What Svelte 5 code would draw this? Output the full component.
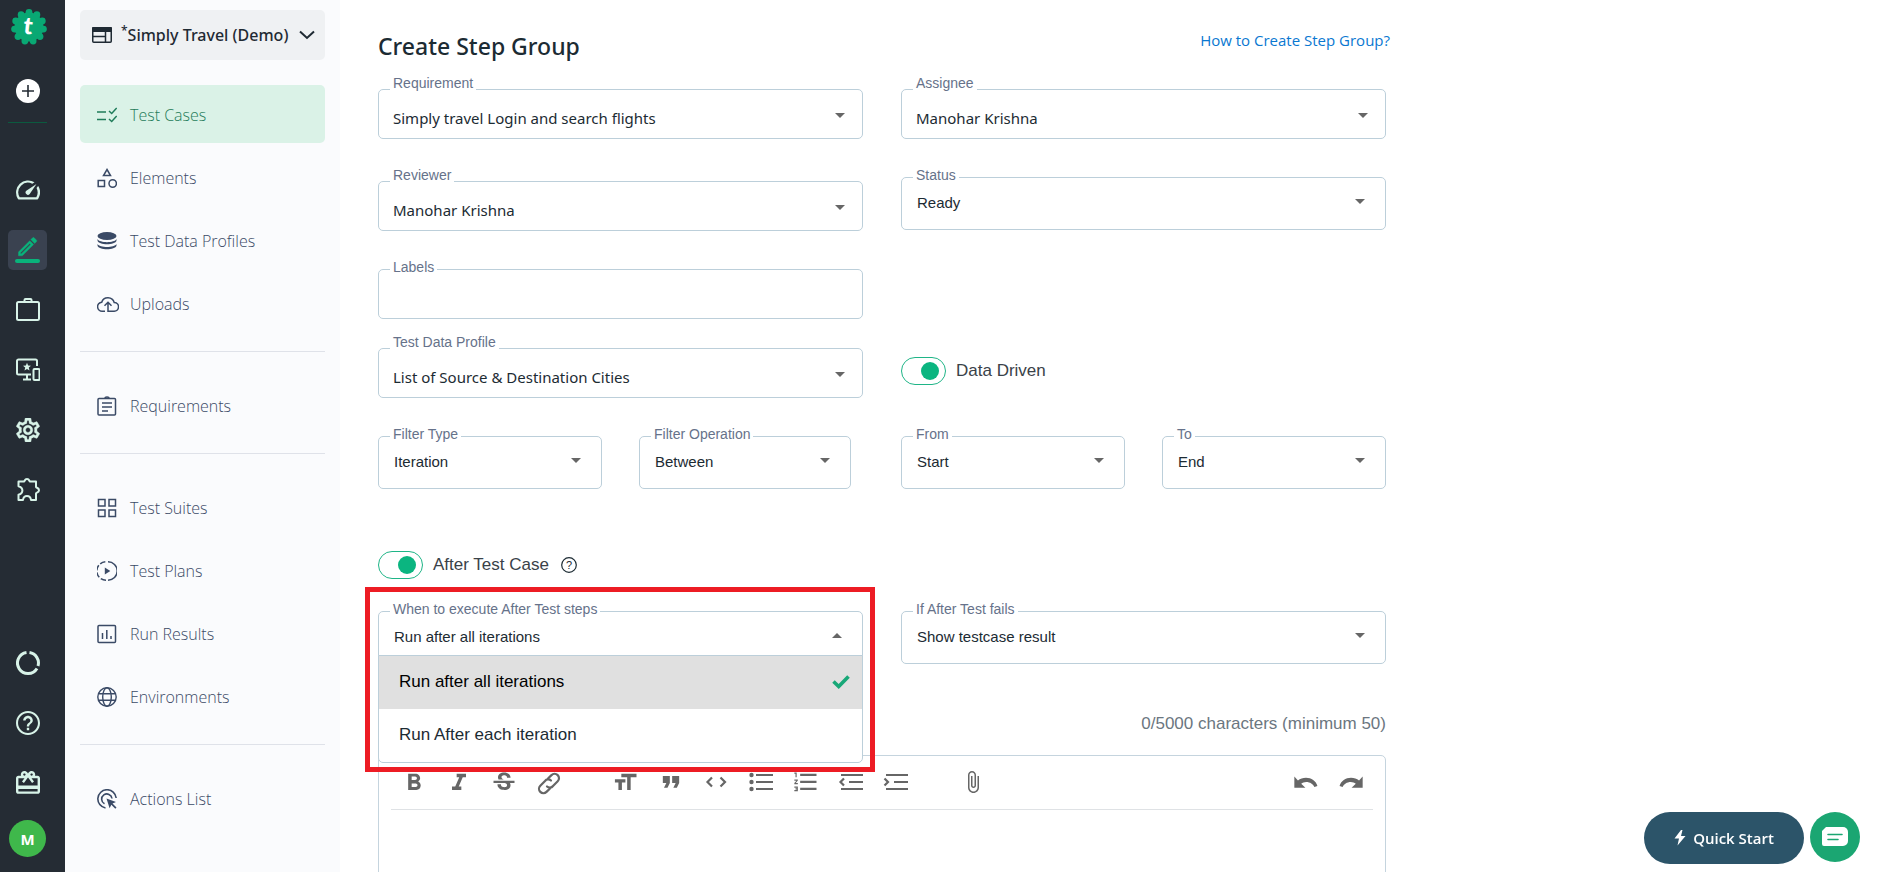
<script>
  const icons = {
    gauge: ['2 2 20 20', '<path fill="currentColor" d="m20.38 8.57-1.23 1.85a8 8 0 0 1-.22 7.58H5.07A8 8 0 0 1 15.58 6.85l1.85-1.23A10 10 0 0 0 3.35 19a2 2 0 0 0 1.72 1h13.85a2 2 0 0 0 1.74-1 10 10 0 0 0-.27-10.44zm-9.79 6.84a2 2 0 0 0 2.83 0l5.66-8.49-8.49 5.66a2 2 0 0 0 0 2.83z"/>'],
    pencil: ['0 0 26 28', '<g transform="translate(.4 -1.6) scale(1.02)"><path fill="currentColor" stroke="currentColor" stroke-width=".4" d="M14.06 9.02l.92.92L5.92 19H5v-.92l9.06-9.06M17.66 3c-.25 0-.51.1-.7.29l-1.83 1.83 3.75 3.75 1.83-1.83c.39-.39.39-1.02 0-1.41l-2.34-2.34c-.2-.2-.45-.29-.71-.29zm-3.6 3.19L3 17.25V21h3.75L17.81 9.94l-3.75-3.75z"/></g><rect x="0" y="23" width="25" height="4" rx="2" fill="currentColor"/>'],
    briefcase: ['0 0 24 24', '<g fill="none" stroke="currentColor" stroke-width="2"><rect x="1" y="4" width="22" height="18" rx="1.5"/><path d="M8.5 4V2a1 1 0 0 1 1-1h5a1 1 0 0 1 1 1v2"/></g>'],
    monitor: ['0 0 24 24', '<g fill="none" stroke="currentColor" stroke-width="2"><path d="M21 8V3a1.500 1.500 0 0 0-1.500-1.500H2.500A1.500 1.500 0 0 0 1 3v12a1.500 1.500 0 0 0 1.500 1.500H15M11 16.500V21M7 21.500h8"/><rect x="17.500" y="11" width="6" height="11" rx="1"/></g><path fill="currentColor" d="m11 4.800 1.100 2.700 2.900.2-2.200 1.900.7 2.900-2.500-1.600-2.500 1.600.7-2.900L7 7.700l2.900-.2z"/>'],
    gear: ['2 2 20 20', '<path fill="currentColor" stroke="currentColor" stroke-width=".3" d="M19.43 12.98c.04-.32.07-.64.07-.98 0-.34-.03-.66-.07-.98l2.11-1.65c.19-.15.24-.42.12-.64l-2-3.46c-.09-.16-.26-.25-.44-.25-.06 0-.12.01-.17.03l-2.49 1c-.52-.4-1.08-.73-1.69-.98l-.38-2.65C14.46 2.18 14.25 2 14 2h-4c-.25 0-.46.18-.49.42l-.38 2.65c-.61.25-1.17.59-1.69.98l-2.49-1c-.06-.02-.12-.03-.18-.03-.17 0-.34.09-.43.25l-2 3.46c-.13.22-.07.49.12.64l2.11 1.65c-.04.32-.07.65-.07.98 0 .33.03.66.07.98l-2.11 1.65c-.19.15-.24.42-.12.64l2 3.46c.09.16.26.25.44.25.06 0 .12-.01.17-.03l2.49-1c.52.4 1.08.73 1.69.98l.38 2.65c.03.24.24.42.49.42h4c.25 0 .46-.18.49-.42l.38-2.65c.61-.25 1.17-.59 1.69-.98l2.49 1c.06.02.12.03.18.03.17 0 .34-.09.43-.25l2-3.46c.12-.22.07-.49-.12-.64l-2.11-1.65zm-1.98-1.71c.04.31.05.52.05.73 0 .21-.02.43-.05.73l-.14 1.13.89.7 1.08.84-.7 1.21-1.27-.51-1.04-.42-.9.68c-.43.32-.84.56-1.25.73l-1.06.43-.16 1.13-.2 1.35h-1.4l-.19-1.35-.16-1.13-1.06-.43c-.43-.18-.83-.41-1.23-.71l-.91-.7-1.06.43-1.27.51-.7-1.21 1.08-.84.89-.7-.14-1.13c-.03-.31-.05-.54-.05-.74s.02-.43.05-.73l.14-1.13-.89-.7-1.08-.84.7-1.21 1.27.51 1.04.42.9-.68c.43-.32.84-.56 1.25-.73l1.06-.43.16-1.13.2-1.35h1.39l.19 1.35.16 1.13 1.06.43c.43.18.83.41 1.23.71l.91.7 1.06-.43 1.27-.51.7 1.21-1.07.85-.89.7.14 1.13zM12 8c-2.21 0-4 1.79-4 4s1.79 4 4 4 4-1.79 4-4-1.79-4-4-4zm0 6c-1.1 0-2-.9-2-2s.9-2 2-2 2 .9 2 2-.9 2-2 2z"/>'],
    puzzle: ['0 0 24 24', '<path fill="none" stroke="currentColor" stroke-width="2" stroke-linejoin="round" d="M2.500 3.500h5.500c.8 0 .5-2.500 3-2.500s2.200 2.500 3 2.500h6v5.500c0 1 3 .6 3 3.200s-3 2.200-3 3.200V22h-5c-.3-2.500-1.800-4-4-4s-3.700 1.500-4 4h-4.500v-5.200c5.200-1.600 5.200-7 0-8.600z"/>'],
    ring: ['0 0 24 24', '<g fill="none" stroke="currentColor" stroke-width="3"><path d="M13.500 1.600A10.500 10.500 0 0 1 22 15"/><path d="M21 17.400A10.500 10.500 0 1 1 10.500 1.600"/></g>'],
    help: ['2 2 20 20', '<path fill="currentColor" d="M11 18h2v-2h-2v2zm1-16C6.480 2 2 6.480 2 12s4.480 10 10 10 10-4.480 10-10S17.520 2 12 2zm0 18.300c-4.580 0-8.300-3.720-8.300-8.300s3.720-8.300 8.300-8.300 8.300 3.720 8.300 8.300-3.720 8.300-8.300 8.300zm0-14.300c-2.210 0-4 1.790-4 4h2c0-1.100.9-2 2-2s2 .9 2 2c0 2-3 1.750-3 5h2c0-2.250 3-2.500 3-5 0-2.210-1.790-4-4-4z"/>'],
    gift: ['2 2 20 20', '<path fill="currentColor" d="M20 6h-2.180c.11-.31.18-.65.18-1 0-1.660-1.340-3-3-3-1.050 0-1.960.54-2.500 1.350l-.5.67-.5-.68C10.960 2.540 10.050 2 9 2 7.340 2 6 3.340 6 5c0 .35.07.69.18 1H4c-1.110 0-1.990.89-1.990 2L2 19c0 1.110.89 2 2 2h16c1.110 0 2-.89 2-2V8c0-1.110-.89-2-2-2zm-5-2c.55 0 1 .45 1 1s-.45 1-1 1-1-.45-1-1 .45-1 1-1zM9 4c.55 0 1 .45 1 1s-.45 1-1 1-1-.45-1-1 .45-1 1-1zm11 15H4v-2h16v2zm0-5H4V8h5.080L7 10.830 8.620 12 11 8.760l1-1.360 1 1.360L15.380 12 17 10.830 14.920 8H20v6z"/>'],
    web: ['0 0 20 16', '<g fill="none" stroke="currentColor" stroke-width="1.500"><rect x=".75" y=".75" width="18.500" height="14.500" rx="1"/><path d="M1 9.500h12M13.500 4v11"/></g><path fill="currentColor" d="M0 1a1 1 0 0 1 1-1h18a1 1 0 0 1 1 1v4H0z"/>'],
    checklist: ['0 0 20 20', '<g fill="none" stroke="currentColor" stroke-width="1.500"><path d="M0 7h9M0 14.500h9M12 6l2.700 2.500 5-5.500M12 14l2.700 2.500 5-5.500"/></g>'],
    shapes: ['0 0 20 20', '<g fill="none" stroke="currentColor" stroke-width="1.500"><path d="M10 1.500 13.500 7.500H6.500zM1.200 12.500h6.300v6H1.200z"/><circle cx="15.700" cy="15.500" r="3.700"/></g>'],
    database: ['0 0 20 20', '<g fill="currentColor"><ellipse cx="10" cy="5" rx="9.500" ry="4"/><path d="M.5 8c2 4.200 17 4.200 19 0v1.500c-1 5-18 5-19 0zM.5 13c2 4 17 4 19 0v1.500c-1 5-18 5-19 0z"/></g>'],
    cloud: ['0 0 22 18', '<g fill="none" stroke="currentColor" stroke-width="1.500"><path d="M8 16.200H5.500a4.500 4.500 0 0 1-.8-9A6.500 6.500 0 0 1 17.200 7.500a4.300 4.300 0 0 1 0 8.700H11V7.500M7.500 10.700 11 7.300l3.500 3.400"/></g>'],
    clipboard: ['0 0 20 20', '<g fill="none" stroke="currentColor" stroke-width="1.500"><rect x="1" y="2.500" width="17.500" height="16.500" rx="1"/><path d="M5 7h10M5 11h10M5 15h6M8 2.500a2 1.500 0 0 1 4 0"/></g>'],
    grid: ['0 0 20 20', '<g fill="none" stroke="currentColor" stroke-width="1.500"><rect x="1.500" y="1.500" width="6.500" height="6.500"/><rect x="12" y="1.500" width="6.500" height="6.500"/><rect x="1.500" y="12" width="6.500" height="6.500"/><rect x="12" y="12" width="6.500" height="6.500"/></g>'],
    plan: ['0 0 20 20', '<g fill="none" stroke="currentColor" stroke-width="1.500"><path d="M11 .8a9.200 9.200 0 0 1 0 18.400"/><path stroke-dasharray="5.500 2" d="M9 19.200A9.200 9.200 0 0 1 9 .8"/></g><path fill="currentColor" d="M7.800 6.500v7l5.500-3.500z"/>'],
    chart: ['0 0 20 20', '<g fill="none" stroke="currentColor" stroke-width="1.500"><rect x="1" y="1.500" width="17.500" height="17" rx="1"/><path d="M5.500 9v6M9.800 6v9M14 12v3"/></g>'],
    globe: ['0 0 20 20', '<g fill="none" stroke="currentColor" stroke-width="1.400"><circle cx="10" cy="10" r="9.200"/><ellipse cx="10" cy="10" rx="4.300" ry="9.200"/><path d="M1.500 6.700h17M1.500 13.300h17"/></g>'],
    action: ['0 0 20 20', '<g fill="none" stroke="currentColor" stroke-width="1.600"><path d="M8.500 19A9.200 9.200 0 1 1 19.200 9"/><path d="M7.500 14.800A5.200 5.200 0 1 1 15 9.500"/></g><path fill="currentColor" d="m9.500 9.500 9.500 3.500-3.500 1.600 4 4-1.200 1.200-4-4-1.700 3.500z"/>'],
    bold: ['0 0 24 24', '<path fill="currentColor" d="M15.600 10.790c.97-.67 1.650-1.770 1.650-2.790 0-2.260-1.750-4-4-4H7v14h7.040c2.090 0 3.710-1.700 3.710-3.790 0-1.520-.86-2.820-2.150-3.420zM10 6.500h3c.83 0 1.500.67 1.500 1.500s-.67 1.500-1.500 1.500h-3v-3zm3.500 9H10v-3h3.500c.83 0 1.500.67 1.500 1.500s-.67 1.500-1.500 1.500z"/>'],
    italic: ['0 0 24 24', '<path fill="currentColor" d="M10 4v3h2.210l-3.420 8H6v3h8v-3h-2.210l3.420-8H18V4z"/>'],
    strike: ['0 0 24 24', '<path fill="currentColor" d="M7.240 8.750c-.26-.48-.39-1.030-.39-1.670 0-.61.13-1.160.4-1.670.26-.5.63-.93 1.110-1.290.48-.35 1.050-.63 1.700-.83.66-.19 1.390-.29 2.180-.29.81 0 1.540.11 2.210.34.66.22 1.230.54 1.690.94.47.4.83.88 1.080 1.430s.38 1.150.38 1.810h-3.010c0-.31-.05-.59-.15-.85-.09-.27-.24-.49-.44-.68-.2-.19-.45-.33-.75-.44-.3-.1-.66-.16-1.060-.16-.39 0-.74.04-1.030.13s-.53.21-.72.36c-.19.16-.34.34-.44.55-.1.21-.15.43-.15.66 0 .48.25.88.74 1.210.38.25.77.48 1.410.7H7.390c-.05-.08-.11-.17-.15-.25zM21 12v-2H3v2h9.620c.18.07.4.14.55.2.37.17.66.34.87.51s.35.36.43.57c.07.2.11.43.11.69 0 .23-.05.45-.14.66-.09.2-.23.38-.42.53-.19.15-.42.26-.71.35-.29.08-.63.13-1.010.13-.43 0-.83-.04-1.180-.13s-.66-.23-.91-.42c-.25-.19-.45-.44-.59-.75s-.25-.76-.25-1.210H6.400c0 .55.08 1.130.24 1.580s.37.85.65 1.210c.28.35.6.66.98.92.37.26.78.48 1.220.65.44.17.9.3 1.380.39.48.08.96.13 1.440.13.8 0 1.530-.09 2.180-.28s1.210-.45 1.670-.79c.46-.34.82-.77 1.070-1.270s.38-1.070.38-1.710c0-.6-.1-1.140-.31-1.610-.05-.11-.11-.23-.17-.33H21V12z"/>'],
    link: ['-2 -3 28 28', '<g fill="none" stroke="currentColor" stroke-width="2.200" stroke-linecap="round"><path d="M10 14.500a4 4 0 0 0 6-.5l4.700-4.700a4.300 4.300 0 0 0-6.200-6.200L11 6.500"/><path d="M14 8.500a4 4 0 0 0-6 .5l-4.700 4.700a4.300 4.300 0 0 0 6.200 6.200L13 16.500"/></g>'],
    size: ['0 0 24 24', '<path fill="currentColor" d="M8 4v3h5v11h3V7h5V4zM2.500 11.500h3V18h3v-6.500h3v-2.800h-9z"/>'],
    quote: ['0 0 24 24', '<path fill="currentColor" d="M6 16h3l2-4V6H5v6h3zm8 0h3l2-4V6h-6v6h3z"/>'],
    code: ['0 0 28 28', '<path fill="none" stroke="currentColor" stroke-width="2.200" d="m10 8.500-4.500 4.500 4.500 4.500M18.500 8.500l4.500 4.500-4.500 4.500"/>'],
    bullets: ['0 0 28 28', '<g fill="currentColor"><circle cx="4.500" cy="6" r="2.200"/><circle cx="4.500" cy="13" r="2.200"/><circle cx="4.500" cy="20" r="2.200"/><path d="M9 5h17v2H9zM9 12h17v2H9zM9 19h17v2H9z"/></g>'],
    numbers: ['0 1 24 24', '<path fill="currentColor" d="M2 17h2v.5H3v1h1v.5H2v1h3v-4H2v1zm1-9h1V4H2v1h1v3zm-1 3h1.800L2 13.100v.9h3v-1H3.200L5 10.900V10H2v1zm5-6v2h14V5H7zm0 14h14v-2H7v2zm0-6h14v-2H7v2z"/>'],
    outdent: ['0 0 28 28', '<path fill="none" stroke="currentColor" stroke-width="2.200" d="M4 6h22M12 13h14M4 20h22M7 9.500 3.500 13 7 16.500"/>'],
    indent: ['0 0 28 28', '<path fill="none" stroke="currentColor" stroke-width="2.200" d="M4 6h22M12 13h14M4 20h22M2.500 9.500 6 13l-3.500 3.500"/>'],
    clip: ['-2 -1 28 28', '<path fill="currentColor" d="M16.500 6v11.500c0 2.210-1.790 4-4 4s-4-1.790-4-4V5c0-1.380 1.120-2.500 2.500-2.500s2.500 1.120 2.500 2.500v10.500c0 .55-.45 1-1 1s-1-.45-1-1V6H10v9.500c0 1.380 1.120 2.500 2.500 2.500s2.500-1.120 2.500-2.500V5c0-2.210-1.790-4-4-4S7 2.790 7 5v12.500c0 3.040 2.460 5.500 5.500 5.500s5.500-2.460 5.500-5.500V6h-1.500z"/>'],
    undo: ['0 0 24 24', '<path fill="currentColor" d="M12 7.500c-2.650 0-5.050.9-6.900 2.300L2 6.500v9.500h9.500l-3.600-3.400c1.200-.9 2.600-1.500 4.300-1.500 3.300 0 6 1.900 7 4.400l2.600-1C20.600 10.300 16.600 7.500 12 7.500z"/>'],
    redo: ['0 0 24 24', '<path fill="currentColor" d="M12 7.500c2.650 0 5.050.9 6.900 2.300L22 6.500v9.500h-9.500l3.600-3.400c-1.200-.9-2.600-1.500-4.300-1.500-3.300 0-6 1.900-7 4.400l-2.600-1C3.400 10.300 7.400 7.500 12 7.500z"/>']
  };

  const railTop = [
    ['gauge', 'Dashboard'],
    ['pencil', 'Create tests'],
    ['briefcase', 'Projects'],
    ['monitor', 'Devices'],
    ['gear', 'Settings'],
    ['puzzle', 'Add-ons']
  ];
  const railBottom = [
    ['ring', 'Usage'],
    ['help', 'Help'],
    ['gift', 'Rewards']
  ];
  const menu = [
    [['checklist', 'Test Cases'], ['shapes', 'Elements'], ['database', 'Test Data Profiles'], ['cloud', 'Uploads']],
    [['clipboard', 'Requirements']],
    [['grid', 'Test Suites'], ['plan', 'Test Plans'], ['chart', 'Run Results'], ['globe', 'Environments']],
    [['action', 'Actions List']]
  ];
  const tools = [
    [['bold', 'Bold'], ['italic', 'Italic'], ['strike', 'Strikethrough'], ['link', 'Link']],
    [['size', 'Text size'], ['quote', 'Quote'], ['code', 'Code'], ['bullets', 'Bulleted list'], ['numbers', 'Numbered list'], ['outdent', 'Decrease indent'], ['indent', 'Increase indent']],
    [['clip', 'Attach file']],
    [['undo', 'Undo'], ['redo', 'Redo']]
  ];
  const choices = ['Run after all iterations', 'Run After each iteration'];
  const lobes = Array.from({ length: 11 }, (_, i) => {
    const a = (i / 11) * Math.PI * 2 - Math.PI / 2;
    return [18 + Math.cos(a) * 14.6, 18 + Math.sin(a) * 14.6];
  });

  let chosen = $state(choices[0]);
  let open = $state(true);
  let dataDriven = $state(true);
  let afterTest = $state(true);
</script>

{#snippet icon(name, w, h)}
  <svg viewBox={icons[name][0]} width={w} height={h} aria-hidden="true">{@html icons[name][1]}</svg>
{/snippet}

{#snippet field(id, label, value, search)}
  <div class="field" class:search>
    <label for={id}>{label}</label>
    <select {id}><option>{value}</option></select>
    <span class="caret"></span>
  </div>
{/snippet}

<div class="shell">
  <nav class="rail" aria-label="Main">
    <a class="logo" href="#home" aria-label="Home">
      <svg viewBox="0 0 36 36" width="36" height="36">
        <g fill="#09a873">
          <circle cx="18" cy="18" r="14.500" />
          {#each lobes as [x, y]}<circle cx={x} cy={y} r="3.400" />{/each}
        </g>
        <text x="17" y="25" text-anchor="middle" class="mark" transform="rotate(6 18 18)">t</text>
      </svg>
    </a>
    <button class="add" aria-label="Add">
      <svg viewBox="0 0 24 24" width="24" height="24">
        <circle cx="12" cy="12" r="12" fill="#fff" />
        <path d="M12 6v12M6 12h12" stroke="#252c34" stroke-width="1.600" />
      </svg>
    </button>
    <hr />
    <div class="rail-group">
      {#each railTop as [name, title]}
        <a class="rail-item" class:current={name === 'pencil'} href="#{name}" aria-label={title}>
          <span>{@render icon(name, name === 'pencil' ? 26 : 24, name === 'pencil' ? 28 : 24)}</span>
        </a>
      {/each}
    </div>
    <div class="rail-group bottom">
      {#each railBottom as [name, title]}
        <a class="rail-item" href="#{name}" aria-label={title}><span>{@render icon(name, 24, 24)}</span></a>
      {/each}
      <button class="avatar">M</button>
    </div>
  </nav>

  <aside>
    <button class="project">
      {@render icon('web', 20, 16)}
      <span><sup>*</sup>Simply Travel (Demo)</span>
      <svg class="chev" viewBox="0 0 16 10" width="16" height="10" aria-hidden="true"><path d="m1 1.500 7 6.500 7-6.500" fill="none" stroke="currentColor" stroke-width="2" /></svg>
    </button>
    {#each menu as group}
      <ul>
        {#each group as [name, text]}
          <li>
            <a href="#{name}" class:active={name === 'checklist'}>
              {@render icon(name, name === 'cloud' ? 22 : 20, name === 'cloud' ? 18 : 20)}{text}
            </a>
          </li>
        {/each}
      </ul>
    {/each}
  </aside>

  <main>
    <form>
      <header>
        <h1>Create Step Group</h1>
        <a href="#guide">How to Create Step Group?</a>
      </header>

      <div class="row">
        {@render field('requirement', 'Requirement', 'Simply travel Login and search flights', true)}
        {@render field('assignee', 'Assignee', 'Manohar Krishna', true)}
      </div>
      <div class="row">
        {@render field('reviewer', 'Reviewer', 'Manohar Krishna', true)}
        {@render field('status', 'Status', 'Ready', false)}
      </div>
      <div class="row tight">
        <div class="field">
          <label for="labels">Labels</label>
          <input id="labels" type="text" />
        </div>
      </div>
      <div class="row">
        {@render field('profile', 'Test Data Profile', 'List of Source & Destination Cities', true)}
        <label class="toggle"><input type="checkbox" role="switch" bind:checked={dataDriven} />Data Driven</label>
      </div>
      <div class="row filters">
        <div class="pair narrow">
          {@render field('filter-type', 'Filter Type', 'Iteration', false)}
          {@render field('filter-op', 'Filter Operation', 'Between', false)}
        </div>
        <div class="pair">
          {@render field('from', 'From', 'Start', false)}
          {@render field('to', 'To', 'End', false)}
        </div>
      </div>

      <div class="after">
        <label class="toggle"><input type="checkbox" role="switch" bind:checked={afterTest} />After Test Case</label>
        <button type="button" class="hint" aria-label="About After Test Case">
          <svg viewBox="0 0 16 16" width="16" height="16"><circle cx="8" cy="8" r="7.300" fill="none" stroke="currentColor" stroke-width="1.200" /><text x="8" y="12" text-anchor="middle" font-size="11" fill="currentColor">?</text></svg>
        </button>
      </div>

      <div class="row last">
        <div class="field open">
          <label for="when">When to execute After Test steps</label>
          <button type="button" id="when" class="combo" aria-haspopup="listbox" aria-expanded={open} onclick={() => (open = !open)}>{chosen}</button>
          <span class="caret up"></span>
          {#if open}
            <div class="options" role="listbox" aria-label="When to execute After Test steps">
              {#each choices as c}
                <button type="button" role="option" aria-selected={c === chosen} class:picked={c === chosen} onclick={() => (chosen = c)}>
                  {c}
                  {#if c === chosen}
                    <svg viewBox="0 0 18 14" width="18" height="14" aria-hidden="true"><path d="m1.500 6.500 5.200 5L16.500 1.500" fill="none" stroke="#18a878" stroke-width="3.600" /></svg>
                  {/if}
                </button>
              {/each}
            </div>
          {/if}
          <div class="marker"></div>
        </div>
        {@render field('fails', 'If After Test fails', 'Show testcase result', false)}
      </div>

      <p class="count">0/5000 characters (minimum 50)</p>
      <div class="editor">
        <div class="tools" role="toolbar" aria-label="Formatting">
          {#each tools as group}
            <div class="tool-group">
              {#each group as [name, title]}
                <button type="button" aria-label={title}>{@render icon(name, 28, 28)}</button>
              {/each}
            </div>
          {/each}
        </div>
        <textarea aria-label="Description"></textarea>
      </div>
    </form>
  </main>

  <div class="floating">
    <button class="quick">
      <svg viewBox="0 0 12 16" width="12" height="16" aria-hidden="true"><path fill="currentColor" d="M7 0 .5 8.500H5L3.500 15.500 11.500 6H7L8.500 0z" /></svg>
      Quick Start
    </button>
    <button class="chat" aria-label="Chat">
      <svg viewBox="0 0 28 20" width="28" height="20"><path fill="#fff" d="M5 0h17a5 5 0 0 1 5 5v9a5 5 0 0 1-5 5H3a2 2 0 0 1-2-2V4z" /><path d="M7 7.500h14M7 12.500h10" stroke="#1ba672" stroke-width="1.600" stroke-linecap="round" /></svg>
    </button>
  </div>
</div>

<style>
  :global(body) {
    margin: 0;
    background: #fff;
  }
  * {
    box-sizing: border-box;
  }
  button,
  select,
  input,
  textarea {
    font: inherit;
    color: inherit;
  }
  button {
    border: 0;
    padding: 0;
    background: none;
    cursor: pointer;
  }
  svg {
    display: block;
    flex: none;
  }
  .shell {
    display: flex;
    height: 100vh;
    overflow: hidden;
    font-family: 'Open Sans', 'Noto Sans', sans-serif;
    color: #1c2b33;
  }

  .rail {
    flex: none;
    width: 65px;
    height: 100%;
    display: flex;
    flex-direction: column;
    align-items: center;
    padding: 9px 10px 15px 0;
    background: #252c34;
    color: #d8f3e8;
  }
  .logo {
    padding-left: 3px;
  }
  .mark {
    font-family: Lato, sans-serif;
    font-weight: 900;
    font-size: 24px;
    fill: #fff;
  }
  .add {
    margin-top: 34px;
  }
  .rail hr {
    width: 39px;
    height: 1px;
    margin: 19px 0 37px;
    border: 0;
    background: #0b5a3f;
  }
  .rail-item {
    display: flex;
    align-items: center;
    justify-content: center;
    height: 60px;
    color: inherit;
  }
  .rail-item span {
    display: flex;
    align-items: center;
    justify-content: center;
    width: 39px;
    height: 40px;
    border-radius: 5px;
  }
  .rail-item.current span {
    background: #3a4250;
    color: #09b37b;
  }
  .bottom {
    margin-top: auto;
    display: flex;
    flex-direction: column;
    align-items: center;
  }
  .avatar {
    width: 37px;
    height: 37px;
    margin-top: 7px;
    border-radius: 50%;
    background: #3fb84b;
    color: #fff;
    font-weight: 700;
    font-size: 15px;
  }

  aside {
    flex: none;
    width: 275px;
    padding: 10px 15px;
    background: #fafbfd;
  }
  .project {
    display: flex;
    align-items: center;
    gap: 9px;
    width: 100%;
    height: 50px;
    margin-bottom: 25px;
    padding: 0 10px 0 12px;
    border-radius: 5px;
    background: #eff1f3;
    color: #1f2a33;
    font-family: 'Noto Sans', 'Open Sans', sans-serif;
    font-size: 16px;
    font-weight: 500;
    white-space: nowrap;
  }
  .project sup {
    font-size: 12px;
    line-height: 1;
  }
  .chev {
    margin-left: auto;
  }
  ul {
    margin: 0;
    padding: 0;
    list-style: none;
    display: grid;
    gap: 5px;
  }
  ul + ul {
    margin-top: 19px;
    padding-top: 24px;
    border-top: 1px solid #dfe2e9;
  }
  aside a {
    display: grid;
    grid-template-columns: 20px 1fr;
    justify-items: center start;
    align-items: center;
    column-gap: 13px;
    height: 58px;
    padding: 2px 0 0 17px;
    border-radius: 5px;
    color: #3a4a66;
    font-size: 16px;
    font-weight: 300;
    text-decoration: none;
  }
  aside a.active {
    background: #daf2e7;
    color: #1f7c5a;
  }

  main {
    flex: 1;
    min-width: 0;
    padding: 26px 38px 0;
    overflow-y: auto;
    scrollbar-width: none;
  }
  form {
    width: 100%;
    max-width: 1008px;
    font-family: 'Liberation Sans', Arial, sans-serif;
  }
  header {
    display: flex;
    justify-content: space-between;
    height: 49px;
    margin-right: -4px;
    font-family: 'Open Sans', 'Noto Sans', sans-serif;
  }
  h1 {
    margin: 0;
    font-family: 'Noto Sans', 'Open Sans', sans-serif;
    font-size: 23px;
    line-height: 40px;
    font-weight: 500;
  }
  header a {
    font-size: 15px;
    line-height: 28px;
    color: #0a78d1;
    text-decoration: none;
  }
  .row {
    display: grid;
    grid-template-columns: 1fr 1fr;
    column-gap: 38px;
    align-items: start;
    margin-bottom: 28px;
  }
  .row.tight {
    margin-bottom: 15px;
  }
  .row.filters {
    margin-bottom: 62px;
  }
  .row.last {
    margin-bottom: 48px;
  }
  .pair {
    display: grid;
    grid-template-columns: 1fr 1fr;
    column-gap: 37px;
  }
  .pair.narrow {
    grid-template-columns: 224fr 212fr;
    padding-right: 12px;
  }
  .field {
    position: relative;
    padding-top: 10px;
  }
  .field.search {
    padding-top: 14px;
  }
  .field > label {
    position: absolute;
    top: 0;
    left: 12px;
    padding: 0 3px;
    background: #fff;
    color: #66728a;
    font-size: 14px;
    line-height: 16px;
    white-space: nowrap;
  }
  .field select,
  .field input,
  .combo {
    display: block;
    width: 100%;
    height: 53px;
    padding: 0 40px 2px 15px;
    border: 1px solid #bccfda;
    border-radius: 5px;
    background: none;
    appearance: none;
    font-size: 15px;
    text-align: left;
    outline: 0;
  }
  .field input {
    height: 50px;
  }
  .field.search select {
    height: 50px;
    padding: 8px 40px 0 14px;
    font-family: 'Noto Sans', 'Open Sans', sans-serif;
  }
  .caret {
    position: absolute;
    right: 21px;
    top: 32px;
    border: 5px solid transparent;
    border-top-color: #666;
    border-bottom: 0;
    pointer-events: none;
  }
  .search .caret {
    right: 18px;
    top: 38px;
  }
  .caret.up {
    border-top: 0;
    border-bottom: 5px solid #666;
  }
  .toggle {
    display: flex;
    align-items: center;
    gap: 10px;
    font-size: 17px;
    color: #3a4249;
  }
  .row > .toggle {
    margin-top: 23px;
  }
  .toggle input {
    display: flex;
    align-items: center;
    justify-content: flex-end;
    width: 45px;
    height: 28px;
    margin: 0;
    padding-right: 6px;
    border: 1px solid #1fb587;
    border-radius: 14px;
    appearance: none;
  }
  .toggle input::before {
    content: '';
    width: 18px;
    height: 18px;
    border-radius: 50%;
    background: #0bb580;
  }
  .toggle input:not(:checked) {
    justify-content: flex-start;
    padding: 0 0 0 6px;
  }
  .after {
    display: flex;
    align-items: center;
    gap: 12px;
    margin-bottom: 22px;
  }
  .open {
    z-index: 1;
  }
  .options {
    position: absolute;
    top: 54px;
    left: 0;
    right: 0;
    border: 1px solid #bccfda;
    border-radius: 0 0 5px 5px;
    background: #fff;
    overflow: hidden;
  }
  .options button {
    display: flex;
    align-items: center;
    justify-content: space-between;
    width: 100%;
    height: 53px;
    padding: 0 12px 2px 20px;
    font-size: 17px;
  }
  .options .picked {
    background: #e0e0e0;
    color: #000;
  }
  .marker {
    position: absolute;
    top: -14px;
    left: -13px;
    right: -12px;
    height: 185px;
    border: 5px solid #ed1c24;
    pointer-events: none;
  }
  .count {
    margin: 0 0 19px;
    font-size: 17px;
    line-height: 24px;
    text-align: right;
    color: #6b7680;
  }
  .editor {
    min-height: 260px;
    padding: 0 12px;
    border: 1px solid #c5d4de;
    border-radius: 5px;
  }
  .tools {
    display: flex;
    gap: 32px;
    height: 54px;
    border-bottom: 1px solid #dfe2e5;
    color: #666;
  }
  .tool-group {
    display: flex;
  }
  .tool-group:last-child {
    margin-left: auto;
  }
  .tools button {
    display: flex;
    align-items: center;
    justify-content: center;
    width: 45px;
  }
  textarea {
    display: block;
    width: 100%;
    height: 190px;
    border: 0;
    outline: 0;
    resize: none;
    background: none;
  }

  .floating {
    position: fixed;
    right: 37px;
    bottom: 8px;
    display: flex;
    gap: 6px;
  }
  .quick {
    display: flex;
    align-items: center;
    justify-content: center;
    gap: 7px;
    width: 160px;
    height: 52px;
    border-radius: 26px;
    background: #2c5469;
    color: #fff;
    font-size: 15px;
    font-weight: 600;
  }
  .chat {
    display: flex;
    align-items: center;
    justify-content: center;
    width: 50px;
    height: 50px;
    border-radius: 50%;
    background: #1ba672;
  }
</style>
